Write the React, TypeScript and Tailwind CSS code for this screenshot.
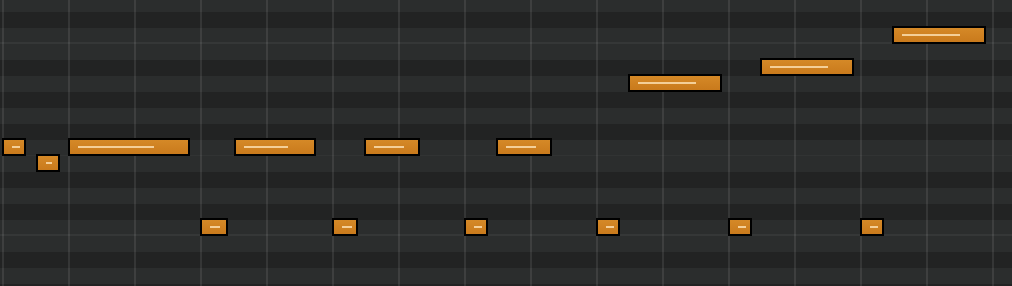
import React from "react";

type Row = { h: number; dark: boolean; sep?: "c" | "e" };

const rows: Row[] = [
  { h: 12, dark: false },
  { h: 16, dark: true },
  { h: 16, dark: false, sep: "c" },
  { h: 16, dark: false },
  { h: 16, dark: true },
  { h: 16, dark: false },
  { h: 16, dark: true },
  { h: 16, dark: false },
  { h: 16, dark: true },
  { h: 16, dark: false, sep: "e" },
  { h: 16, dark: false },
  { h: 16, dark: true },
  { h: 16, dark: false },
  { h: 16, dark: true },
  { h: 16, dark: false, sep: "c" },
  { h: 16, dark: false },
  { h: 16, dark: true },
  { h: 16, dark: false },
  { h: 2, dark: true },
];

type Note = { x: number; w: number; row: number; lx: number; lw: number };

const notes: Note[] = [
  { x: 2, w: 24, row: 140, lx: 10, lw: 8 },
  { x: 36, w: 24, row: 156, lx: 10, lw: 6 },
  { x: 68, w: 122, row: 140, lx: 10, lw: 76 },
  { x: 234, w: 82, row: 140, lx: 10, lw: 44 },
  { x: 364, w: 56, row: 140, lx: 10, lw: 30 },
  { x: 496, w: 56, row: 140, lx: 10, lw: 30 },
  { x: 628, w: 94, row: 76, lx: 10, lw: 58 },
  { x: 760, w: 94, row: 60, lx: 10, lw: 58 },
  { x: 892, w: 94, row: 28, lx: 10, lw: 58 },
  { x: 200, w: 28, row: 220, lx: 10, lw: 10 },
  { x: 332, w: 26, row: 220, lx: 10, lw: 10 },
  { x: 464, w: 24, row: 220, lx: 10, lw: 8 },
  { x: 596, w: 24, row: 220, lx: 10, lw: 8 },
  { x: 728, w: 24, row: 220, lx: 10, lw: 8 },
  { x: 860, w: 24, row: 220, lx: 10, lw: 8 },
];

const vlines = Array.from({ length: 16 }, (_, i) => 2 + i * 66);

export default function App() {
  return (
    <div className="relative w-[1012px] h-[286px] overflow-hidden bg-[#222323]">
      <div className="flex flex-col">
        {rows.map((r, i) => (
          <div
            key={i}
            className={`relative shrink-0 ${r.dark ? "bg-[#222323]" : "bg-[#2b2d2d]"}`}
            style={{ height: r.h }}
          >
            {r.sep === "c" && (
              <div className="absolute left-0 right-0 bottom-0 h-[2px] bg-[#353737]" />
            )}
            {r.sep === "e" && (
              <div className="absolute left-0 right-0 bottom-0 h-px bg-[#313333]" />
            )}
          </div>
        ))}
      </div>
      {vlines.map((x) => (
        <div
          key={x}
          className="absolute top-0 bottom-0 w-[2px] bg-[rgba(255,255,255,0.09)]"
          style={{ left: x }}
        />
      ))}
      {notes.map((n, i) => (
        <div
          key={i}
          className="absolute h-[18px] border-2 border-black bg-gradient-to-b from-[#d58927] to-[#c97a1c]"
          style={{ left: n.x, top: n.row - 2, width: n.w }}
        >
          <div
            className="absolute top-[6px] h-[2px] bg-[#f4cf98]"
            style={{ left: n.lx - 2, width: n.lw }}
          />
        </div>
      ))}
    </div>
  );
}
